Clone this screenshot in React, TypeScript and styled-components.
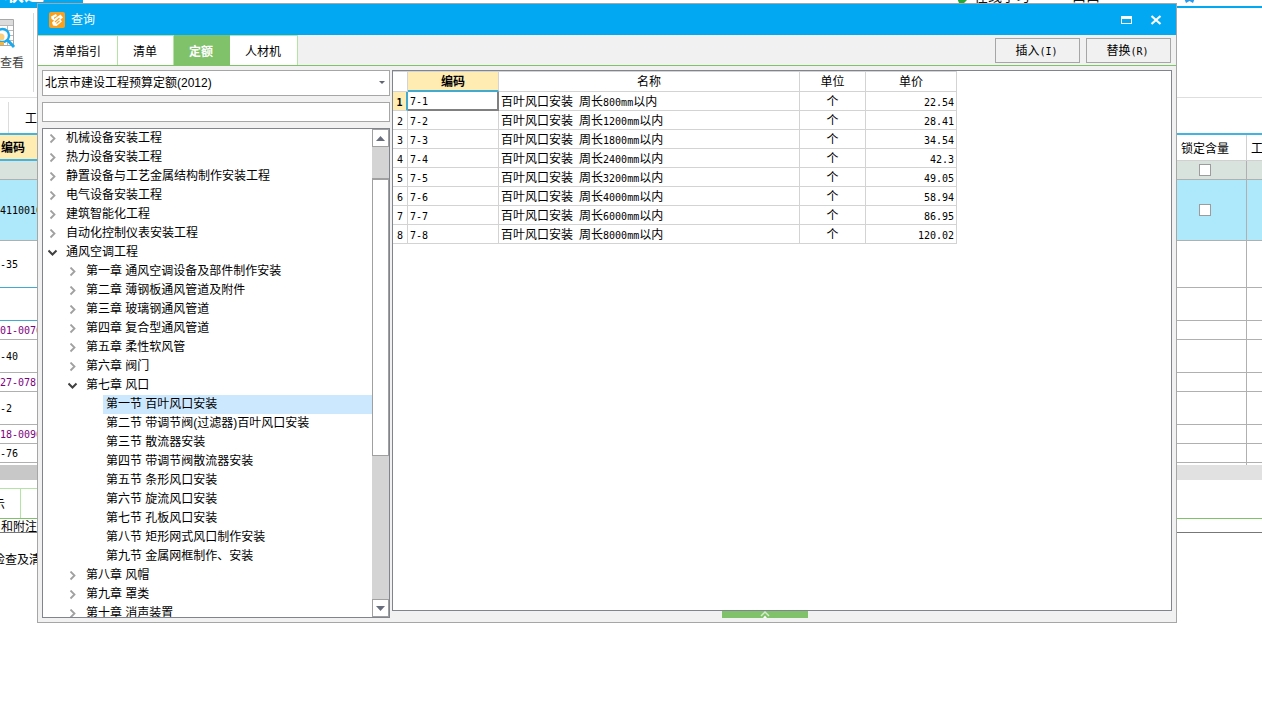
import React from 'react';
import styled, { createGlobalStyle, css } from 'styled-components';

const cjk = '"Liberation Sans", "Noto Sans CJK SC", sans-serif';

const GlobalStyle = createGlobalStyle`
  *, *::before, *::after { box-sizing: border-box; }
  body { margin: 0; background: #fff; color: #000; font: 12px/18px ${cjk}; }
  button, input, select { font: inherit; color: inherit; margin: 0; border-radius: 0; }
  ul { list-style: none; margin: 0; padding: 0; }
  table { border-collapse: separate; border-spacing: 0; table-layout: fixed; }
  th, td { padding: 0; font-weight: 400; overflow: hidden; white-space: nowrap; }
`;

/* ---------- shared text ---------- */

const Latin = styled.span`
  font-family: "DejaVu Sans Mono", monospace;
  font-size: 10px;
  white-space: pre;
`;

function Mixed({ text }: { text: string }) {
  return (
    <>
      {text.split(/([\x20-\x7e]+)/).map((part, i) =>
        i % 2 ? <Latin key={i}>{part}</Latin> : part
      )}
    </>
  );
}

/* ---------- main window ---------- */

const Shell = styled.div`
  position: relative;
  min-height: 100vh;
  overflow: hidden;
`;

const TopBar = styled.header`
  display: flex;
  justify-content: space-between;
  align-items: stretch;
  height: 8px;
  overflow: hidden;
  border-bottom: 2px solid #02a8f1;
`;

const Brand = styled.div`
  display: flex;
  align-items: flex-end;
  width: 83px;
  padding: 0 4px;
  background: #02a8f1;
  color: #fff;
  font-size: 20px;
  line-height: 24px;
  font-weight: 700;
`;

const TopLinks = styled.nav`
  display: flex;
  align-items: flex-end;
  padding: 0 67px 2px 0;
  font-size: 14px;
  line-height: 16px;
`;

const TopLink = styled.a<{ $gap?: number }>`
  display: flex;
  align-items: flex-end;
  gap: 6px;
  margin-right: ${(p) => p.$gap ?? 0}px;
  color: #111;
  text-decoration: none;
  white-space: nowrap;
`;

const Ribbon = styled.div`
  display: flex;
  height: 90px;
  padding: 5px 0;
  border-bottom: 1px solid #dedede;
`;

const RibbonGroup = styled.div`
  width: 34px;
  border-right: 1px solid #d8d8d8;
`;

const RibbonButton = styled.button`
  display: flex;
  flex-direction: column;
  align-items: flex-start;
  gap: 2px;
  padding: 5px 0 0;
  border: 0;
  background: none;
  color: #444;
`;

const ToolStrip = styled.div`
  display: flex;
  height: 35px;
  padding-top: 4px;
`;

const ToolItem = styled.div`
  margin-left: 8px;
  padding: 8px 0 0 16px;
  border-left: 1px solid #dcdcdc;
`;

const BackGrid = styled.table`
  width: 100%;
  border-top: 2px solid #42b4e2;
`;

const BackHead = styled.th<{ $active?: boolean }>`
  height: 26px;
  padding-top: 2px;
  text-align: left;
  border-right: 1px solid #d0d0d0;
  border-bottom: 1px solid #d0d0d0;
  &:last-child { border-right: 0; }
  ${(p) =>
    p.$active &&
    css`
      padding-left: 1px;
      background: #ffecb3;
      font-weight: 700;
      border-bottom: 2px solid #42b4e2;
    `}
`;

const HeadLabel = styled.span`
  padding-left: 4px;
`;

type Tone = 'plain' | 'group' | 'picked' | 'cyan' | 'last';
const tones: Record<Tone, string> = {
  plain: '#fff',
  group: '#d9e3de',
  picked: '#ade8fb',
  cyan: '#fff',
  last: '#fff',
};

const BackRow = styled.tr<{ $h: number; $tone: Tone }>`
  height: ${(p) => p.$h}px;
  background: ${(p) => tones[p.$tone]};
  td {
    height: ${(p) => p.$h}px;
    line-height: 16px;
    border-right: 1px solid #b0b0b0;
    border-bottom: ${(p) => (p.$tone === 'last' ? 0 : 1)}px solid #b0b0b0;
  }
  td:last-child { border-right: 0; }
  td:first-child {
    ${(p) => p.$tone === 'cyan' && 'border-bottom-color: #42a9cf;'}
  }
`;

const Code = styled(Latin)<{ $purple?: boolean }>`
  color: ${(p) => (p.$purple ? '#800080' : '#000')};
`;

const Tick = styled.input`
  appearance: none;
  display: block;
  width: 12px;
  height: 12px;
  margin: 0 0 0 22px;
  border: 1px solid #9c9c9c;
  background: #fff;
`;

const ScrollStrip = styled.div`
  height: 15px;
  background: linear-gradient(to right, #c8c8c8 50%, #e1e1e1 50%);
`;

const LowerTabs = styled.div`
  display: flex;
  height: 31px;
  margin-top: 8px;
  border-bottom: 1px solid #80c269;
`;

const LowerTab = styled.button`
  width: 21px;
  padding: 2px 0 0;
  overflow: hidden;
  text-align: left;
  background: #fff;
  border: solid #b5e3a5;
  border-width: 1px 1px 0 0;
`;

const LowerTabRest = styled.div`
  flex: 1;
  max-width: 60px;
  border-top: 1px solid #b5e3a5;
`;

const Scrolled = styled.span`
  display: block;
  margin-left: -7px;
  white-space: nowrap;
`;

const Caption = styled.div`
  height: 14px;
  line-height: 16px;
  padding-left: 1px;
  border-bottom: 1px solid #777;
`;

const Notes = styled.div`
  padding-top: 18px;
`;

const backRows: { h: number; tone: Tone; code?: string; purple?: boolean; tick?: boolean }[] = [
  { h: 19, tone: 'group', tick: true },
  { h: 61, tone: 'picked', code: '411001001', tick: true },
  { h: 47, tone: 'cyan', code: '-35' },
  { h: 33, tone: 'cyan' },
  { h: 19, tone: 'plain', code: '01-0076', purple: true },
  { h: 33, tone: 'plain', code: '-40' },
  { h: 19, tone: 'plain', code: '27-078', purple: true },
  { h: 33, tone: 'plain', code: '-2' },
  { h: 19, tone: 'plain', code: '18-0096', purple: true },
  { h: 19, tone: 'plain', code: '-76' },
  { h: 2, tone: 'last' },
];

function PreviewIcon() {
  return (
    <svg width="16" height="34" viewBox="0 0 16 34" aria-hidden="true">
      <path d="M0 1.5H13.5V27.5H0" fill="#fff" stroke="#a8a8a8" />
      <path d="M0 2H13V7H0Z" fill="#dcdcdc" />
      <path d="M0 7.5H13M0 12.5H13M0 17.5H13M0 22.5H13M7.500 7V27" stroke="#b8b8b8" />
      <circle cx="2.500" cy="17.500" r="6.500" fill="#fff" stroke="#1ba9ec" strokeWidth="2.400" />
      <circle cx="1" cy="19" r="3.500" fill="#f8cf7c" />
      <path d="M0 24H4V27H0Z" fill="#f3b53c" />
      <path d="M7.500 22L14 29" stroke="#1ba9ec" strokeWidth="3" />
    </svg>
  );
}

function MainWindow() {
  return (
    <>
      <TopBar>
        <Brand>联造</Brand>
        <TopLinks>
          <TopLink href="#learn" $gap={42}>
            <svg width="12" height="12" viewBox="0 0 12 12" aria-hidden="true">
              <path d="M1 6L3 11H8L11 8L10 6L7 8L5 6Z" fill="#27a93a" />
            </svg>
            在线学习
          </TopLink>
          <TopLink href="#more" $gap={84}>
            口口
          </TopLink>
          <TopLink href="#user" aria-label="user">
            <svg width="11" height="12" viewBox="0 0 11 12" aria-hidden="true">
              <path d="M0 6H11L9 11L5.500 9L2 11Z" fill="#2d9bea" />
            </svg>
          </TopLink>
        </TopLinks>
      </TopBar>
      <Ribbon>
        <RibbonGroup>
          <RibbonButton>
            <PreviewIcon />
            查看
          </RibbonButton>
        </RibbonGroup>
      </Ribbon>
      <ToolStrip>
        <ToolItem>工</ToolItem>
      </ToolStrip>
      <BackGrid>
        <colgroup>
          <col style={{ width: 60 }} />
          <col />
          <col style={{ width: 70 }} />
          <col style={{ width: 15 }} />
        </colgroup>
        <thead>
          <tr>
            <BackHead $active>编码</BackHead>
            <BackHead />
            <BackHead>
              <HeadLabel>锁定含量</HeadLabel>
            </BackHead>
            <BackHead>
              <HeadLabel>工</HeadLabel>
            </BackHead>
          </tr>
        </thead>
        <tbody>
          {backRows.map((r, i) => (
            <BackRow key={i} $h={r.h} $tone={r.tone}>
              <td>{r.code && <Code $purple={r.purple}>{r.code}</Code>}</td>
              <td />
              <td>{r.tick && <Tick type="checkbox" aria-label="锁定含量" />}</td>
              <td />
            </BackRow>
          ))}
        </tbody>
      </BackGrid>
      <ScrollStrip />
      <LowerTabs>
        <LowerTab>
          <Scrolled>示</Scrolled>
        </LowerTab>
        <LowerTabRest />
      </LowerTabs>
      <Caption>和附注</Caption>
      <Notes>
        <Scrolled>检查及清</Scrolled>
      </Notes>
    </>
  );
}

/* ---------- query dialog ---------- */

const Dialog = styled.section`
  position: absolute;
  inset: 3px 85px 78px 37px;
  display: flex;
  flex-direction: column;
  border: 1px solid #a6a6a6;
  background: #f1f1f1;
`;

const TitleBar = styled.div`
  display: flex;
  align-items: center;
  gap: 6px;
  height: 31px;
  flex: none;
  padding: 0 14px 0 11px;
  background: #02a8f1;
  color: #fff;
`;

const Title = styled.h1`
  flex: 1;
  margin: 0;
  font-size: 12px;
  line-height: 18px;
  font-weight: 400;
`;

const WindowButton = styled.button`
  display: flex;
  padding: 0;
  margin-left: 11px;
  border: 0;
  background: none;
`;

const TabBar = styled.div`
  display: flex;
  justify-content: space-between;
  height: 31px;
  flex: none;
  border-bottom: 1px solid #80c269;
`;

const Tabs = styled.div`
  display: flex;
`;

const Tab = styled.button<{ $active?: boolean }>`
  padding: 3px 16px 0 15px;
  border: solid #b5e3a5;
  border-width: 1px 1px 0 0;
  background: #fff;
  ${(p) =>
    p.$active &&
    css`
      border-color: #80c269;
      background: #80c269;
      color: #fff;
      font-weight: 700;
    `}
`;

const Actions = styled.div`
  display: flex;
  gap: 6px;
  padding: 3px 5px 2px;
`;

const ActionButton = styled.button`
  width: 85px;
  padding: 1px 2px 0 0;
  border: 1px solid #a6a6a6;
  background: #f1f1f1;
`;

const Body = styled.div`
  display: flex;
  flex: 1;
  gap: 2px;
  min-height: 0;
  padding: 4px;
`;

const Side = styled.div`
  display: flex;
  flex-direction: column;
  gap: 6px;
  width: 348px;
  flex: none;
`;

const Picker = styled.div`
  display: flex;
  align-items: center;
  height: 26px;
  flex: none;
  padding-right: 4px;
  border: 1px solid #a6a6a6;
  background: #fff;
`;

const PickerSelect = styled.select`
  appearance: none;
  flex: 1;
  padding: 0 2px;
  border: 0;
  background: none;
`;

const Search = styled.input`
  height: 20px;
  flex: none;
  padding: 0 2px;
  border: 1px solid #a6a6a6;
  background: #fff;
`;

const TreeFrame = styled.div`
  display: flex;
  flex: 1;
  min-height: 0;
  border: 1px solid #7f848e;
  background: #fff;
`;

const Tree = styled.ul`
  flex: 1;
  overflow: hidden;
`;

const TreeRow = styled.li<{ $level: number }>`
  display: flex;
  height: 19px;
  padding-left: ${(p) => p.$level * 20}px;
`;

const TreeToggle = styled.span`
  display: flex;
  align-items: center;
  justify-content: center;
  width: 20px;
  flex: none;
`;

const TreeLabel = styled.span<{ $selected?: boolean }>`
  flex: 1;
  padding-left: 3px;
  line-height: 18px;
  white-space: nowrap;
  background: ${(p) => (p.$selected ? '#cce8ff' : 'none')};
`;

const ScrollBar = styled.div`
  display: flex;
  flex-direction: column;
  width: 17px;
  flex: none;
  background: #d4d4d4;
`;

const ScrollButton = styled.button`
  display: flex;
  align-items: center;
  justify-content: center;
  height: 18px;
  flex: none;
  padding: 0;
  border: 1px solid #a0a0a0;
  background: #fff;
`;

const ScrollTrack = styled.div<{ $grow: number }>`
  flex: ${(p) => p.$grow} 0 0;
`;

const ScrollThumb = styled(ScrollTrack)`
  border: solid #a0a0a0;
  border-width: 2px 1px 1px;
  background: #fff;
`;

const Main = styled.div`
  display: flex;
  flex-direction: column;
  flex: 1;
  min-width: 0;
`;

const GridFrame = styled.div`
  flex: 1;
  min-height: 0;
  overflow: hidden;
  border: 1px solid #7f848e;
  background: #fff;
`;

const Grid = styled.table`
  width: 564px;
`;

const Head = styled.th<{ $active?: boolean }>`
  height: 21px;
  line-height: 16px;
  padding-top: 1px;
  text-align: center;
  border: solid #d3d3d3;
  border-width: 1px 1px 1px 0;
  ${(p) =>
    p.$active &&
    css`
      background: #ffecb3;
      font-weight: 700;
      border-bottom: 2px solid #42a9cf;
    `}
`;

const Cell = styled.td<{ $align?: string; $current?: boolean }>`
  height: 19px;
  padding: 2px 2px 0;
  line-height: 14px;
  text-align: ${(p) => p.$align ?? 'left'};
  border: solid #d3d3d3;
  border-width: 0 1px 1px 0;
  ${(p) =>
    p.$current &&
    css`
      border-width: 0 2px 2px 0;
      border-color: #808080;
    `}
`;

const RowHead = styled.th<{ $current?: boolean }>`
  height: 19px;
  padding-top: 2px;
  line-height: 14px;
  text-align: center;
  border: solid #d3d3d3;
  border-width: 0 1px 1px 0;
  ${(p) =>
    p.$current &&
    css`
      background: #ffecb3;
      border-right: 2px solid #42a9cf;
      span { font-weight: 700; }
    `}
`;

const Expander = styled.button`
  display: flex;
  justify-content: center;
  align-self: center;
  width: 86px;
  height: 7px;
  flex: none;
  margin-right: 34px;
  padding: 0;
  border: 0;
  background: #80c269;
`;

type Node = { level: number; text: string; open?: boolean; selected?: boolean };

const nodes: Node[] = [
  { level: 0, text: '机械设备安装工程' },
  { level: 0, text: '热力设备安装工程' },
  { level: 0, text: '静置设备与工艺金属结构制作安装工程' },
  { level: 0, text: '电气设备安装工程' },
  { level: 0, text: '建筑智能化工程' },
  { level: 0, text: '自动化控制仪表安装工程' },
  { level: 0, text: '通风空调工程', open: true },
  { level: 1, text: '第一章 通风空调设备及部件制作安装' },
  { level: 1, text: '第二章 薄钢板通风管道及附件' },
  { level: 1, text: '第三章 玻璃钢通风管道' },
  { level: 1, text: '第四章 复合型通风管道' },
  { level: 1, text: '第五章 柔性软风管' },
  { level: 1, text: '第六章 阀门' },
  { level: 1, text: '第七章 风口', open: true },
  { level: 2, text: '第一节 百叶风口安装', selected: true },
  { level: 2, text: '第二节 带调节阀(过滤器)百叶风口安装' },
  { level: 2, text: '第三节 散流器安装' },
  { level: 2, text: '第四节 带调节阀散流器安装' },
  { level: 2, text: '第五节 条形风口安装' },
  { level: 2, text: '第六节 旋流风口安装' },
  { level: 2, text: '第七节 孔板风口安装' },
  { level: 2, text: '第八节 矩形网式风口制作安装' },
  { level: 2, text: '第九节 金属网框制作、安装' },
  { level: 1, text: '第八章 风帽' },
  { level: 1, text: '第九章 罩类' },
  { level: 1, text: '第十章 消声装置' },
];

const quotas = [
  ['7-1', '百叶风口安装 周长800mm以内', '22.54'],
  ['7-2', '百叶风口安装 周长1200mm以内', '28.41'],
  ['7-3', '百叶风口安装 周长1800mm以内', '34.54'],
  ['7-4', '百叶风口安装 周长2400mm以内', '42.3'],
  ['7-5', '百叶风口安装 周长3200mm以内', '49.05'],
  ['7-6', '百叶风口安装 周长4000mm以内', '58.94'],
  ['7-7', '百叶风口安装 周长6000mm以内', '86.95'],
  ['7-8', '百叶风口安装 周长8000mm以内', '120.02'],
];

function Chevron({ open }: { open?: boolean }) {
  return (
    <svg width="10" height="10" viewBox="0 0 10 10" fill="none" aria-hidden="true">
      {open ? (
        <path d="M0.500 2.500L4.500 6.500L8.500 2.500" stroke="#404040" strokeWidth="2" />
      ) : (
        <path d="M2.500 0.500L6.500 4.500L2.500 8.500" stroke="#a0a0a0" strokeWidth="1.800" />
      )}
    </svg>
  );
}

function QueryDialog() {
  return (
    <Dialog role="dialog" aria-labelledby="query-title">
      <TitleBar>
        <svg width="16" height="16" viewBox="0 0 16 16" aria-hidden="true">
          <rect width="16" height="16" rx="2" fill="#f9a01f" />
          <path d="M2 4.500L7 2L8 4L5 5.500V7L11.500 2.500L14 5.500L11.500 7.500L13 9.500L7.500 14L4 13.500L3 10.500L5 8.500L2.500 7Z" fill="#fff" />
          <path d="M6 10L10.500 6M7.500 11.500L10.500 9" stroke="#f9a01f" strokeWidth="1.100" />
        </svg>
        <Title id="query-title">查询</Title>
        <WindowButton aria-label="还原">
          <svg width="12" height="10" viewBox="0 0 12 10" aria-hidden="true">
            <path d="M0 1H11V9H0ZM1 4V8H10V4Z" fill="#fff" fillRule="evenodd" />
          </svg>
        </WindowButton>
        <WindowButton aria-label="关闭">
          <svg width="12" height="10" viewBox="0 0 12 10" aria-hidden="true">
            <path d="M1.500 1L10.500 9M10.500 1L1.500 9" stroke="#fff" strokeWidth="2.200" />
          </svg>
        </WindowButton>
      </TitleBar>
      <TabBar>
        <Tabs role="tablist">
          <Tab role="tab">清单指引</Tab>
          <Tab role="tab">清单</Tab>
          <Tab role="tab" aria-selected="true" $active>
            定额
          </Tab>
          <Tab role="tab">人材机</Tab>
        </Tabs>
        <Actions>
          <ActionButton>
            <Mixed text="插入(I)" />
          </ActionButton>
          <ActionButton>
            <Mixed text="替换(R)" />
          </ActionButton>
        </Actions>
      </TabBar>
      <Body>
        <Side>
          <Picker>
            <PickerSelect aria-label="定额库">
              <option>北京市建设工程预算定额(2012)</option>
            </PickerSelect>
            <svg width="7" height="4" viewBox="0 0 7 4" aria-hidden="true">
              <path d="M1 0H7L4 3Z" fill="#606573" />
            </svg>
          </Picker>
          <Search type="text" aria-label="搜索" />
          <TreeFrame>
            <Tree role="tree">
              {nodes.map((n) => (
                <TreeRow
                  key={n.text}
                  role="treeitem"
                  aria-level={n.level + 1}
                  aria-selected={!!n.selected}
                  $level={n.level}
                >
                  <TreeToggle>{n.level < 2 && <Chevron open={n.open} />}</TreeToggle>
                  <TreeLabel $selected={n.selected}>{n.text}</TreeLabel>
                </TreeRow>
              ))}
            </Tree>
            <ScrollBar>
              <ScrollButton aria-label="向上滚动">
                <svg width="9" height="5" viewBox="0 0 9 5" aria-hidden="true">
                  <path d="M0 5H9L4.500 0Z" fill="#686d7c" />
                </svg>
              </ScrollButton>
              <ScrollTrack $grow={31} />
              <ScrollThumb $grow={278} />
              <ScrollTrack $grow={144} />
              <ScrollButton aria-label="向下滚动">
                <svg width="9" height="5" viewBox="0 0 9 5" aria-hidden="true">
                  <path d="M0 0H9L4.500 5Z" fill="#686d7c" />
                </svg>
              </ScrollButton>
            </ScrollBar>
          </TreeFrame>
        </Side>
        <Main>
          <GridFrame>
            <Grid>
              <colgroup>
                <col style={{ width: 15 }} />
                <col style={{ width: 91 }} />
                <col style={{ width: 301 }} />
                <col style={{ width: 66 }} />
                <col style={{ width: 91 }} />
              </colgroup>
              <thead>
                <tr>
                  <Head />
                  <Head $active>编码</Head>
                  <Head>名称</Head>
                  <Head>单位</Head>
                  <Head>单价</Head>
                </tr>
              </thead>
              <tbody>
                {quotas.map(([code, name, price], i) => (
                  <tr key={code}>
                    <RowHead $current={i === 0}>
                      <Latin>{i + 1}</Latin>
                    </RowHead>
                    <Cell $current={i === 0}>
                      <Latin>{code}</Latin>
                    </Cell>
                    <Cell>
                      <Mixed text={name} />
                    </Cell>
                    <Cell $align="center">个</Cell>
                    <Cell $align="right">
                      <Latin>{price}</Latin>
                    </Cell>
                  </tr>
                ))}
              </tbody>
            </Grid>
          </GridFrame>
          <Expander aria-label="展开">
            <svg width="10" height="7" viewBox="0 0 10 7" fill="none" aria-hidden="true">
              <path d="M1 5L5 1L9 5" stroke="#d5ecca" strokeWidth="1.500" />
              <path d="M3 7L5 4.500L7 7Z" fill="#fff" />
            </svg>
          </Expander>
        </Main>
      </Body>
    </Dialog>
  );
}

export default function App() {
  return (
    <Shell>
      <GlobalStyle />
      <MainWindow />
      <QueryDialog />
    </Shell>
  );
}
